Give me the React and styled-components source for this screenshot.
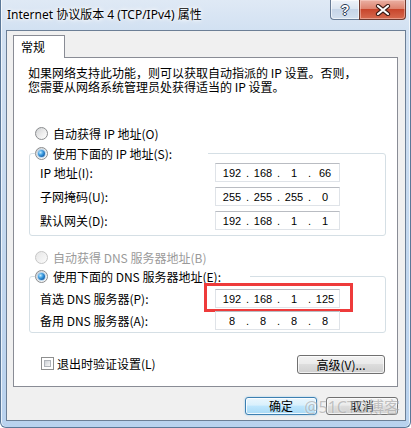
import React from "react";
import styled, { createGlobalStyle } from "styled-components";

const GlobalStyle = createGlobalStyle`
  html, body {
    margin: 0;
    padding: 0;
    background: #ffffff;
  }
`;

const FONTE = `"Noto Sans CJK SC", "Noto Sans", sans-serif`;

const Janela = styled.div`
  position: relative;
  box-sizing: border-box;
  width: 411px;
  height: 428px;
  display: flex;
  flex-direction: column;
  padding: 0 4px 6px 5px;
  border: 1px solid #5b7898;
  border-top: none;
  border-radius: 0 0 6px 6px;
  background: linear-gradient(180deg, #dfe9f5 0%, #d2e1f2 30px, #c3d8ef 60%, #b9d2ee 100%);
  box-shadow: inset 1px 0 0 rgba(255, 255, 255, 0.7), inset -1px 0 0 rgba(255, 255, 255, 0.7);
  font-family: ${FONTE};
  font-size: 12px;
  color: #000;
`;

const BarraTitulo = styled.div`
  height: 30px;
  display: flex;
  justify-content: space-between;
  align-items: flex-start;
`;

const Titulo = styled.div`
  margin: 7px 0 0 1px;
  line-height: 16px;
  font-size: 12px;
  font-family: "Noto Sans", "Noto Sans CJK SC", sans-serif;
  text-shadow: 0 0 6px #fff, 0 0 4px #fff, 0 0 2px #fff;
`;

const BotoesJanela = styled.div`
  display: flex;
`;

const BotaoAjuda = styled.div`
  box-sizing: border-box;
  width: 29px;
  height: 20px;
  border: 1px solid #687c96;
  border-top: none;
  border-right: none;
  border-radius: 0 0 0 4px;
  background: linear-gradient(180deg, #eef3f9 0%, #dbe5f1 45%, #c6d5e8 50%, #d3e0ef 100%);
  box-shadow: inset 0 0 0 1px rgba(255, 255, 255, 0.6);
  display: flex;
  align-items: center;
  justify-content: center;
  font-family: "Liberation Sans", sans-serif;
  font-weight: bold;
  font-size: 14px;
  color: #fff;
  text-shadow: 1px 0 0 #2d3d55, -1px 0 0 #2d3d55, 0 1px 0 #2d3d55, 0 -1px 0 #2d3d55;
`;

const BotaoFechar = styled.div`
  box-sizing: border-box;
  width: 47px;
  height: 20px;
  border: 1px solid #6e3a30;
  border-top: none;
  border-radius: 0 0 4px 0;
  background: linear-gradient(180deg, #eab0a3 0%, #de8470 45%, #c8462c 50%, #d66a4f 100%);
  box-shadow: inset 0 0 0 1px rgba(255, 220, 210, 0.45);
  display: flex;
  align-items: center;
  justify-content: center;
`;

const AreaCliente = styled.div`
  flex: 1;
  display: flex;
  flex-direction: column;
  border: 1px solid #6c7f96;
  background: #f0f0f0;
  padding: 4px 7px 5px 6px;
`;

const Abas = styled.div`
  display: flex;
  height: 22px;
`;

const Aba = styled.div`
  position: relative;
  z-index: 1;
  box-sizing: border-box;
  width: 52px;
  height: 23px;
  border: 1px solid #898c95;
  border-bottom: none;
  background: #fff;
  padding-left: 7px;
  line-height: 21px;
  font-size: 12px;
`;

const Painel = styled.div`
  box-sizing: border-box;
  height: 330px;
  border: 1px solid #898c95;
  background: #fff;
  padding: 8px 11px 0 14px;
  display: flex;
  flex-direction: column;
`;

const LinhaTexto = styled.div`
  height: 14px;
  line-height: 14px;
  white-space: nowrap;
`;

const LinhaRadio = styled.div`
  display: flex;
  align-items: center;
  height: 16px;
  margin-top: ${(p) => p.$topo || 0}px;
  padding-left: ${(p) => p.$recuo || 0}px;
  gap: 5px;
  color: ${(p) => (p.$desativado ? "#9a9a9a" : "#000")};
  white-space: nowrap;
`;

const Radio = styled.span`
  box-sizing: border-box;
  flex: none;
  width: 13px;
  height: 13px;
  border-radius: 50%;
  border: 1px solid ${(p) => (p.$desativado ? "#c6c6c6" : "#8a8c8e")};
  background: ${(p) =>
    p.$desativado
      ? "linear-gradient(135deg, #e6e6e6, #fbfbfb)"
      : "linear-gradient(135deg, #cfd1d3 0%, #eeeeee 55%, #ffffff 100%)"};
  display: flex;
  align-items: center;
  justify-content: center;

  &::after {
    content: "";
    display: ${(p) => (p.$marcado ? "block" : "none")};
    width: 7px;
    height: 7px;
    border-radius: 50%;
    background: radial-gradient(circle at 35% 35%, #c4ecff 0%, #3a9be0 40%, #0d4f98 85%);
    box-shadow: 0 0 0 1px rgba(150, 200, 240, 0.6);
  }
`;

const Grupo = styled.fieldset`
  margin: ${(p) => p.$topo}px 0 0 1px;
  padding: 0;
  min-width: 0;
  border: 1px solid #d5dfe5;
  border-radius: 3px;
`;

const Legenda = styled.legend`
  box-sizing: border-box;
  width: ${(p) => p.$largura}px;
  margin-left: 5px;
  padding: 0;
`;

const Campos = styled.div`
  display: grid;
  grid-template-columns: 175px 125px;
  row-gap: ${(p) => p.$espaco}px;
  padding: ${(p) => p.$cima}px 0 ${(p) => p.$baixo}px 10px;
`;

const Rotulo = styled.div`
  height: 19px;
  line-height: 19px;
  white-space: nowrap;
`;

const CampoIP = styled.div`
  position: relative;
  box-sizing: border-box;
  width: 125px;
  height: 19px;
  border: 1px solid #dfe3e8;
  border-top-color: #b9bcc2;
  background: #fff;
  display: flex;
  align-items: center;
  padding-left: 3px;
  font-family: "Liberation Sans", sans-serif;
  font-size: 11px;
`;

const Octeto = styled.span`
  width: 26px;
  text-align: center;
`;

const Ponto = styled.span`
  width: 5px;
  text-align: center;
`;

const Destaque = styled.div`
  position: absolute;
  left: -12px;
  top: -7px;
  right: -14px;
  bottom: -5px;
  border: 3px solid #ee3b3b;
  pointer-events: none;
`;

const LinhaFinal = styled.div`
  display: flex;
  justify-content: space-between;
  align-items: flex-start;
  margin-top: 22px;
`;

const LinhaCheck = styled.label`
  display: flex;
  align-items: center;
  gap: 3px;
  height: 14px;
  margin: 1px 0 0 13px;
  white-space: nowrap;
`;

const Caixa = styled.span`
  box-sizing: border-box;
  width: 13px;
  height: 13px;
  border: 1px solid #8e8f8f;
  background: #fff;
  padding: 2px;

  &::after {
    content: "";
    display: block;
    box-sizing: border-box;
    width: 100%;
    height: 100%;
    border: 1px solid #b0b4ba;
    background: linear-gradient(135deg, #cdd1d6, #f7f7f7);
  }
`;

const Botao = styled.button`
  box-sizing: border-box;
  width: ${(p) => p.$largura || 72}px;
  height: ${(p) => p.$altura || 18}px;
  margin: 0 ${(p) => p.$direita || 0}px 0 0;
  padding: 0;
  border: 1px solid ${(p) => (p.$padrao ? "#3c7fb1" : "#707070")};
  border-radius: 3px;
  background: ${(p) =>
    p.$padrao
      ? "linear-gradient(180deg, #eaf6fd 0%, #d9f0fc 45%, #bee6fd 50%, #a7d9f5 100%)"
      : "linear-gradient(180deg, #f2f2f2 0%, #ebebeb 45%, #dddddd 50%, #cfcfcf 100%)"};
  box-shadow: ${(p) =>
    p.$padrao
      ? "inset 0 0 0 1px rgba(255,255,255,0.8), 0 0 2px rgba(80,170,230,0.6)"
      : "inset 0 0 0 1px rgba(255,255,255,0.7)"};
  font-family: ${FONTE};
  font-size: 12px;
  line-height: 16px;
  color: #000;
`;

const Rodape = styled.div`
  display: flex;
  justify-content: flex-end;
  gap: 9px;
  margin-top: 10px;
`;

const MarcaDagua = styled.div`
  position: absolute;
  right: 10px;
  bottom: 11px;
  font-family: "Noto Sans", "Noto Sans CJK SC", sans-serif;
  font-size: 16px;
  line-height: 18px;
  color: rgba(140, 140, 140, 0.5);
  text-shadow: 0 0 2px rgba(255, 255, 255, 0.7);
  pointer-events: none;
`;

const camposIP = [
  { rotulo: "IP 地址(I):", valor: ["192", "168", "1", "66"] },
  { rotulo: "子网掩码(U):", valor: ["255", "255", "255", "0"] },
  { rotulo: "默认网关(D):", valor: ["192", "168", "1", "1"] },
];

const camposDNS = [
  { rotulo: "首选 DNS 服务器(P):", valor: ["192", "168", "1", "125"], destaque: true },
  { rotulo: "备用 DNS 服务器(A):", valor: ["8", "8", "8", "8"] },
];

function Endereco({ valor, destaque }) {
  return (
    <CampoIP>
      {valor.map((parte, i) => (
        <React.Fragment key={i}>
          {i > 0 && <Ponto>.</Ponto>}
          <Octeto>{parte}</Octeto>
        </React.Fragment>
      ))}
      {destaque && <Destaque />}
    </CampoIP>
  );
}

function ListaCampos({ campos, espaco, cima, baixo }) {
  return (
    <Campos $espaco={espaco} $cima={cima} $baixo={baixo}>
      {campos.map((c) => (
        <React.Fragment key={c.rotulo}>
          <Rotulo>{c.rotulo}</Rotulo>
          <Endereco valor={c.valor} destaque={c.destaque} />
        </React.Fragment>
      ))}
    </Campos>
  );
}

export default function App() {
  return (
    <>
      <GlobalStyle />
      <Janela>
        <BarraTitulo>
          <Titulo>Internet 协议版本 4 (TCP/IPv4) 属性</Titulo>
          <BotoesJanela>
            <BotaoAjuda>?</BotaoAjuda>
            <BotaoFechar>
              <svg width="16" height="12" viewBox="0 0 16 12">
                <path d="M3 2 L13 10 M13 2 L3 10" stroke="#3b1a14" strokeWidth="4.2" strokeLinecap="round" />
                <path d="M3 2 L13 10 M13 2 L3 10" stroke="#ffffff" strokeWidth="2.2" strokeLinecap="round" />
              </svg>
            </BotaoFechar>
          </BotoesJanela>
        </BarraTitulo>

        <AreaCliente>
          <Abas>
            <Aba>常规</Aba>
          </Abas>
          <Painel>
            <LinhaTexto>如果网络支持此功能，则可以获取自动指派的 IP 设置。否则，</LinhaTexto>
            <LinhaTexto>您需要从网络系统管理员处获得适当的 IP 设置。</LinhaTexto>

            <LinhaRadio $topo={31} $recuo={7}>
              <Radio />
              自动获得 IP 地址(O)
            </LinhaRadio>
            <Grupo $topo={4}>
              <Legenda $largura={173}>
                <LinhaRadio>
                  <Radio $marcado />
                  使用下面的 IP 地址(S):
                </LinhaRadio>
              </Legenda>
              <ListaCampos campos={camposIP} espaco={5} cima={2} baixo={5} />
            </Grupo>

            <LinhaRadio $topo={13} $recuo={7} $desativado>
              <Radio $desativado />
              自动获得 DNS 服务器地址(B)
            </LinhaRadio>
            <Grupo $topo={3}>
              <Legenda $largura={215}>
                <LinhaRadio>
                  <Radio $marcado />
                  使用下面的 DNS 服务器地址(E):
                </LinhaRadio>
              </Legenda>
              <ListaCampos campos={camposDNS} espaco={3} cima={5} baixo={2} />
            </Grupo>

            <LinhaFinal>
              <LinhaCheck>
                <Caixa />
                退出时验证设置(L)
              </LinhaCheck>
              <Botao $largura={88} $altura={19} $direita={1}>
                高级(V)...
              </Botao>
            </LinhaFinal>
          </Painel>

          <Rodape>
            <Botao $padrao>确定</Botao>
            <Botao>取消</Botao>
          </Rodape>
        </AreaCliente>

        <MarcaDagua>@51CTO博客</MarcaDagua>
      </Janela>
    </>
  );
}
